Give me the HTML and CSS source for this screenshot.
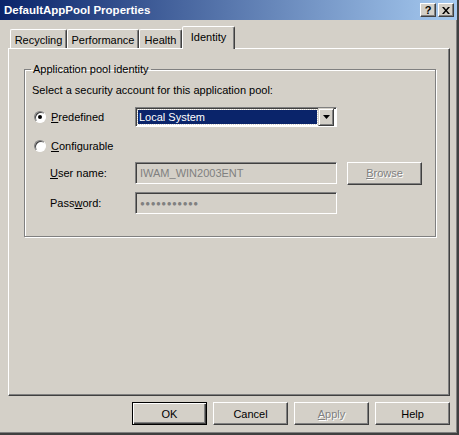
FILE: index.html
```html
<!DOCTYPE html>
<html lang="en">
<head>
  <meta charset="UTF-8" />
  <title>DefaultAppPool Properties</title>
  <link rel="stylesheet" href="styles.css">
</head>
<body>
  <div class="window">
    <div class="titlebar">
      <span class="title">DefaultAppPool Properties</span>
      <div class="caption-btns">
        <button class="cap">?</button>
        <button class="cap close">
          <svg width="8" height="7" viewBox="0 0 8 7"><path d="M0 0h2l2 2.5L6 0h2L5 3.5 8 7H6L4 4.5 2 7H0l3-3.5z" fill="#000"/></svg>
        </button>
      </div>
    </div>

    <div class="content">
      <div class="tabs">
        <div class="tab t1">Recycling</div>
        <div class="tab t2">Performance</div>
        <div class="tab t3">Health</div>
        <div class="tab active">Identity</div>
      </div>

      <div class="panel">
        <fieldset class="group">
          <legend>Application pool identity</legend>
          <div class="intro">Select a security account for this application pool:</div>

          <div class="row r-pre">
            <label class="radio-label"><span class="radio checked"></span><span><u>P</u>redefined</span></label>
            <div class="combo">
              <div class="combo-text"><span class="sel">Local System</span></div>
              <div class="combo-btn">
                <svg width="7" height="4" viewBox="0 0 7 4"><path d="M0 0h7L3.5 4z" fill="#000"/></svg>
              </div>
            </div>
          </div>

          <div class="row r-conf">
            <label class="radio-label"><span class="radio"></span><span><u>C</u>onfigurable</span></label>
          </div>

          <div class="row r-user">
            <span class="field-label"><u>U</u>ser name:</span>
            <div class="field">IWAM_WIN2003ENT</div>
            <button class="btn disabled browse"><u>B</u>rowse</button>
          </div>

          <div class="row r-pass">
            <span class="field-label">Pass<u>w</u>ord:</span>
            <div class="field dots">●●●●●●●●●●●</div>
          </div>
        </fieldset>
      </div>

      <div class="buttons">
        <button class="btn default">OK</button>
        <button class="btn">Cancel</button>
        <button class="btn disabled"><u>A</u>pply</button>
        <button class="btn">Help</button>
      </div>
    </div>
  </div>
</body>
</html>
```

FILE: styles.css
```css
body {
  margin: 0;
  background-color: #d4d0c8;
  font-family: "Liberation Sans", Arial, sans-serif;
  font-size: 11px;
  color: #000;
}

.window {
  width: 459px;
  height: 435px;
  box-sizing: border-box;
  background-color: #d4d0c8;
  border-right: 2px solid #404040;
  border-bottom: 2px solid #404040;
  box-shadow: inset -1px -1px #808080;
}

.titlebar {
  height: 20px;
  display: flex;
  align-items: center;
  justify-content: space-between;
  background: linear-gradient(to right, #0a246a, #a6caf0);
  padding: 0 3px 0 4px;
}

.title {
  color: #fff;
  font-weight: bold;
  font-size: 11.5px;
}

.caption-btns {
  display: flex;
  gap: 2px;
}

.cap {
  width: 16px;
  height: 14px;
  padding: 0;
  box-sizing: border-box;
  background-color: #d4d0c8;
  border: 1px solid;
  border-color: #fff #404040 #404040 #fff;
  box-shadow: inset -1px -1px #808080;
  font-family: "Liberation Sans", Arial, sans-serif;
  font-weight: bold;
  font-size: 11px;
  line-height: 11px;
  display: flex;
  align-items: center;
  justify-content: center;
}

.content {
  padding: 6px 7px 0 8px;
}

.tabs {
  display: flex;
  align-items: flex-end;
  height: 22px;
  padding-left: 2px;
  position: relative;
  z-index: 1;
}

.tab {
  height: 19px;
  box-sizing: border-box;
  border: 1px solid;
  border-bottom: none;
  border-color: #fff #404040 transparent #fff;
  box-shadow: inset -1px 0 #808080;
  border-radius: 2px 2px 0 0;
  display: flex;
  align-items: center;
  justify-content: center;
  padding-top: 1px;
}

.t1 { width: 57px; }
.t2 { width: 72px; }
.t3 { width: 43px; }

.tab.active {
  width: 53px;
  height: 23px;
  margin-bottom: -1px;
  background-color: #d4d0c8;
  padding: 0 0 3px 0;
}

.panel {
  height: 348px;
  box-sizing: border-box;
  border: 1px solid;
  border-color: #fff #404040 #404040 #fff;
  box-shadow: inset -1px -1px #808080;
  padding: 14px 0 0 15px;
}

.group {
  width: 412px;
  height: 174px;
  box-sizing: border-box;
  margin: 0;
  padding: 0;
  border: 1px solid #808080;
  box-shadow: 1px 1px #fff, inset 1px 1px #fff;
}

.group legend {
  padding: 0 2px;
  margin-left: 6px;
}

.intro {
  padding: 9px 0 0 7px;
  height: 15px;
}

.row {
  display: flex;
  align-items: center;
  padding-left: 9px;
}

.r-pre { margin-top: 8px; height: 20px; }
.r-conf { margin-top: 9px; height: 20px; }
.r-user { margin-top: 6px; height: 22px; padding-left: 25px; }
.r-pass { margin-top: 8px; height: 22px; padding-left: 25px; }

.radio-label {
  display: flex;
  align-items: center;
  gap: 5px;
  width: 101px;
}

.radio {
  width: 12px;
  height: 12px;
  box-sizing: border-box;
  border-radius: 50%;
  background-color: #fff;
  border: 1px solid;
  border-color: #808080 #fff #fff #808080;
  box-shadow: inset 1px 1px #404040;
  position: relative;
}

.radio.checked::after {
  content: "";
  position: absolute;
  left: 3px;
  top: 3px;
  width: 4px;
  height: 4px;
  border-radius: 50%;
  background-color: #000;
}

.combo {
  width: 202px;
  height: 20px;
  box-sizing: border-box;
  display: flex;
  background-color: #fff;
  border: 1px solid;
  border-color: #808080 #fff #fff #808080;
  box-shadow: inset 1px 1px #404040;
  padding: 2px 2px 2px 2px;
}

.combo-text {
  flex: 1;
  padding-right: 1px;
}

.sel {
  display: block;
  height: 100%;
  box-sizing: border-box;
  background-color: #0a246a;
  color: #fff;
  outline: 1px dotted #d4d0c8;
  padding-left: 1px;
  line-height: 14px;
}

.combo-btn {
  width: 16px;
  box-sizing: border-box;
  background-color: #d4d0c8;
  border: 1px solid;
  border-color: #d4d0c8 #404040 #404040 #d4d0c8;
  box-shadow: inset 1px 1px #fff, inset -1px -1px #808080;
  display: flex;
  align-items: center;
  justify-content: center;
  margin-top: -2px;
  margin-bottom: -2px;
}

.field-label {
  width: 85px;
}

.field {
  width: 202px;
  height: 22px;
  box-sizing: border-box;
  border: 1px solid;
  border-color: #808080 #fff #fff #808080;
  box-shadow: inset 1px 1px #404040;
  color: #808080;
  padding: 0 4px;
  display: flex;
  align-items: center;
}

.dots {
  font-size: 8px;
  letter-spacing: 0.5px;
}

.btn {
  width: 75px;
  height: 23px;
  box-sizing: border-box;
  padding: 0;
  background-color: #d4d0c8;
  border: 1px solid;
  border-color: #fff #404040 #404040 #fff;
  box-shadow: inset -1px -1px #808080;
  font-family: "Liberation Sans", Arial, sans-serif;
  font-size: 11px;
  color: #000;
}

.btn.disabled {
  color: #808080;
  text-shadow: 1px 1px #fff;
}

.btn.default {
  border: 1px solid #000;
  box-shadow: inset 1px 1px #fff, inset -1px -1px #404040, inset -2px -2px #808080;
}

.browse {
  margin-left: 10px;
}

.buttons {
  display: flex;
  justify-content: flex-end;
  gap: 6px;
  padding: 6px 0 0 0;
}
```
